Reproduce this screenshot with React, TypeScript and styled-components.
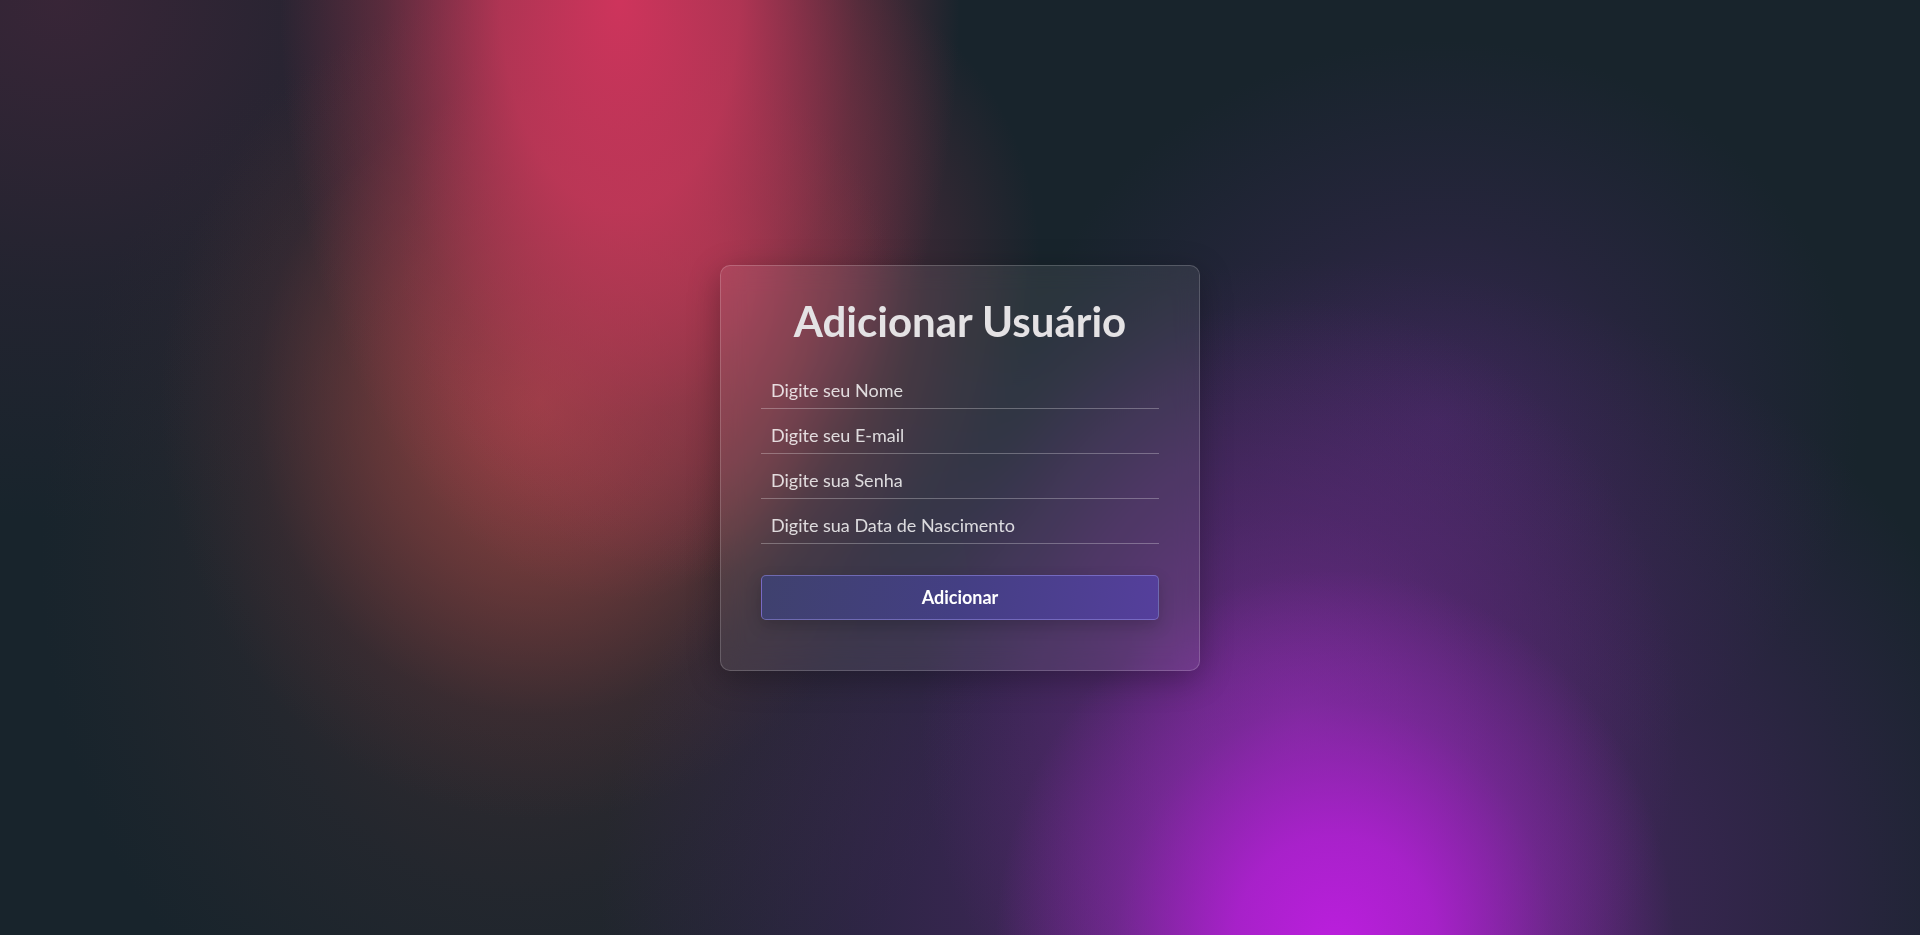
import React from "react";
import styled, { createGlobalStyle } from "styled-components";

const GlobalStyle = createGlobalStyle`
  html, body {
    margin: 0;
    padding: 0;
    height: 100%;
  }
  body {
    font-family: Lato, "Liberation Sans", sans-serif;
  }
  * { box-sizing: border-box; }
`;

const Page = styled.div`
  width: 100%;
  min-height: 100vh;
  display: flex;
  align-items: center;
  justify-content: center;
  background-color: #18242c;
  background-image:
    radial-gradient(ellipse 340px 380px at 1335px 950px,
      rgba(188, 30, 222, 1) 0%, rgba(180, 32, 215, 0.85) 30%, rgba(150, 40, 185, 0.45) 65%, rgba(120, 40, 160, 0) 100%),
    radial-gradient(ellipse 380px 420px at 1300px 720px,
      rgba(135, 45, 165, 0.6) 0%, rgba(110, 42, 140, 0.35) 50%, rgba(80, 40, 110, 0) 100%),
    radial-gradient(ellipse 720px 640px at 1320px 900px,
      rgba(110, 40, 140, 0.75) 0%, rgba(90, 40, 120, 0.45) 50%, rgba(60, 35, 90, 0) 100%),
    radial-gradient(ellipse 420px 380px at 1440px 420px,
      rgba(62, 40, 92, 0.8) 0%, rgba(55, 38, 80, 0.45) 50%, rgba(50, 35, 75, 0) 100%),
    radial-gradient(ellipse 340px 600px at 620px 0px,
      rgba(206, 52, 92, 1) 0%, rgba(200, 55, 90, 0.85) 35%, rgba(170, 55, 80, 0.4) 70%, rgba(140, 50, 70, 0) 100%),
    radial-gradient(ellipse 320px 320px at 720px 260px,
      rgba(190, 60, 85, 0.55) 0%, rgba(160, 55, 80, 0.3) 50%, rgba(120, 45, 65, 0) 100%),
    radial-gradient(ellipse 380px 420px at 540px 400px,
      rgba(160, 70, 68, 0.9) 0%, rgba(130, 62, 62, 0.6) 45%, rgba(90, 50, 55, 0.25) 75%, rgba(60, 40, 50, 0) 100%),
    radial-gradient(ellipse 480px 560px at 520px 560px,
      rgba(80, 50, 50, 0.6) 0%, rgba(60, 45, 50, 0.3) 60%, rgba(40, 40, 45, 0) 100%),
    radial-gradient(ellipse 600px 520px at 60px 0px,
      rgba(70, 38, 60, 0.7) 0%, rgba(55, 35, 55, 0.35) 55%, rgba(40, 35, 50, 0) 100%);
`;

const Card = styled.form`
  width: 480px;
  padding: 31px 40px 50px;
  display: flex;
  flex-direction: column;
  background: rgba(255, 255, 255, 0.08);
  backdrop-filter: blur(12px);
  border: 1px solid rgba(255, 255, 255, 0.18);
  border-radius: 10px;
  box-shadow: 0 8px 32px rgba(0, 0, 0, 0.28);
`;

const Title = styled.h1`
  margin: 0 0 19px;
  font-size: 42px;
  line-height: 48px;
  font-weight: 700;
  text-align: center;
  color: #e4e2e4;
`;

const Field = styled.input`
  display: block;
  width: 100%;
  height: 45px;
  padding: 8px 10px 0;
  border: none;
  border-bottom: 1px solid rgba(255, 255, 255, 0.28);
  background: transparent;
  outline: none;
  font-family: inherit;
  font-size: 18px;
  color: #fff;

  &::placeholder {
    color: rgba(255, 255, 255, 0.82);
  }
`;

const SubmitButton = styled.button`
  margin-top: 31px;
  height: 45px;
  width: 100%;
  border: 1px solid rgba(150, 140, 230, 0.55);
  border-radius: 5px;
  background: linear-gradient(100deg, #3f416e 0%, #443f84 50%, #553f9c 100%);
  box-shadow: 0 6px 16px rgba(0, 0, 0, 0.18);
  color: #ffffff;
  font-family: inherit;
  font-size: 18px;
  font-weight: 700;
  cursor: pointer;
`;

export default function App() {
  return (
    <>
      <GlobalStyle />
      <Page>
        <Card onSubmit={(e) => e.preventDefault()}>
          <Title>Adicionar Usuário</Title>
          <Field type="text" placeholder="Digite seu Nome" />
          <Field type="email" placeholder="Digite seu E-mail" />
          <Field type="password" placeholder="Digite sua Senha" />
          <Field type="text" placeholder="Digite sua Data de Nascimento" />
          <SubmitButton type="submit">Adicionar</SubmitButton>
        </Card>
      </Page>
    </>
  );
}
